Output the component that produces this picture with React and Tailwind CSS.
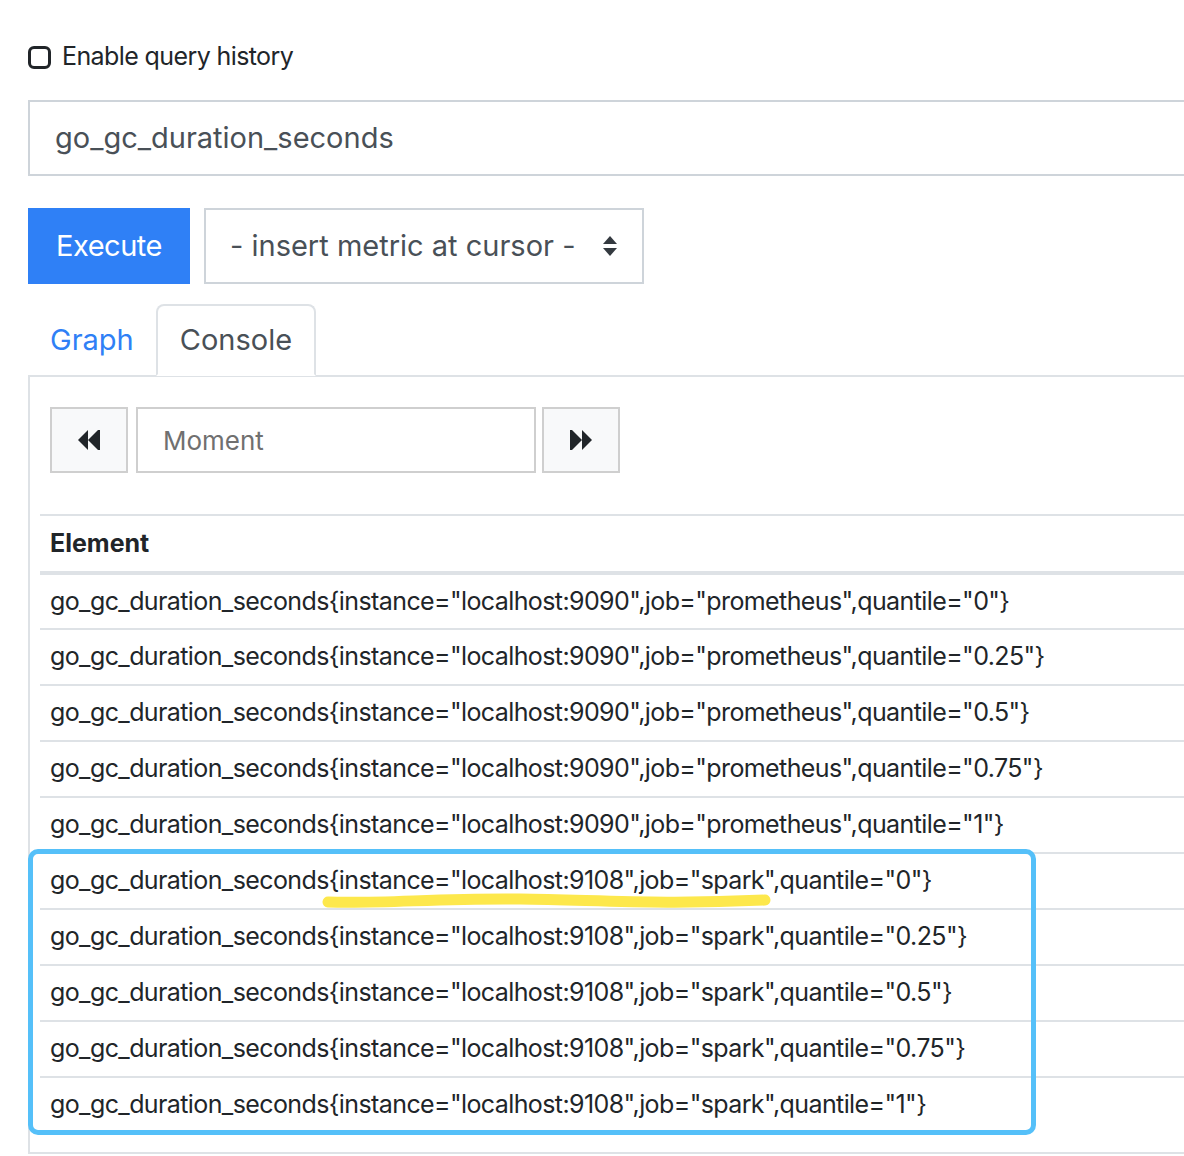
import React from 'react';

const rows = [
  ['localhost:9090', 'prometheus', '0'],
  ['localhost:9090', 'prometheus', '0.25'],
  ['localhost:9090', 'prometheus', '0.5'],
  ['localhost:9090', 'prometheus', '0.75'],
  ['localhost:9090', 'prometheus', '1'],
  ['localhost:9108', 'spark', '0'],
  ['localhost:9108', 'spark', '0.25'],
  ['localhost:9108', 'spark', '0.5'],
  ['localhost:9108', 'spark', '0.75'],
  ['localhost:9108', 'spark', '1'],
];

function Rewind({ flip }) {
  return (
    <svg width="24" height="22" viewBox="0 0 24 22" className={flip ? 'rotate-180' : ''}>
      <path d="M1 11 L11 1 L11 21 Z" fill="#212529" />
      <path d="M11 11 L21 1 L21 21 Z" fill="#212529" />
      <rect x="21" y="1" width="2" height="20" fill="#212529" />
    </svg>
  );
}

export default function App() {
  return (
    <div className="w-[1184px] h-[1156px] overflow-hidden bg-white pl-[28px] pt-[43px] text-[#212529]" style={{ fontFamily: 'Inter, "Noto Sans", sans-serif' }}>
      <label className="flex items-center gap-[11px] h-[28px] text-[25px] tracking-[-0.6px]">
        <span className="w-[23px] h-[23px] rounded-[6px] border-[3px] border-[#212529]" />
        <span>Enable query history</span>
      </label>

      <div className="mt-[29px] w-[1200px] h-[76px] border-2 border-[#ced4da] flex items-center pl-[25px] text-[29px] text-[#495057]">
        go_gc_duration_seconds
      </div>

      <div className="mt-[32px] flex gap-[14px]">
        <button className="w-[162px] h-[76px] bg-[#2f80f6] text-white text-[29px] tracking-[-0.5px]">Execute</button>
        <div className="w-[440px] h-[76px] border-2 border-[#ced4da] flex items-center justify-between pl-[24px] pr-[24px] text-[29px] text-[#495057]">
          <span>- insert metric at cursor -</span>
          <svg width="16" height="22" viewBox="0 0 16 22">
            <path d="M8 1 L15 9 L1 9 Z" fill="#343a40" />
            <path d="M1 13 L15 13 L8 21 Z" fill="#343a40" />
          </svg>
        </div>
      </div>

      <div className="mt-[20px] flex w-[1200px] border-b-2 border-[#dee2e6] text-[29px]">
        <div className="h-[71px] px-[22px] flex items-center text-[#2f80f6]">Graph</div>
        <div className="h-[72px] -mb-[2px] px-[22px] flex items-center border-2 border-b-white border-[#dee2e6] rounded-t-[8px] bg-white text-[#495057]">Console</div>
      </div>

      <div className="w-[1200px] h-[777px] border-l-2 border-b-2 border-[#dee2e6] pl-[10px] pt-[30px]">
        <div className="flex ml-[10px] h-[66px]">
          <button className="w-[78px] h-[66px] bg-[#f8f9fa] border-2 border-[#cfcfcf] flex items-center justify-center">
            <Rewind />
          </button>
          <div className="ml-[8px] w-[400px] h-[66px] border-2 border-[#cfcfcf] flex items-center pl-[25px] text-[26px] text-[#707070]">Moment</div>
          <button className="ml-[6px] w-[78px] h-[66px] bg-[#f8f9fa] border-2 border-[#cfcfcf] flex items-center justify-center">
            <Rewind flip />
          </button>
        </div>

        <div className="relative mt-[41px] text-[25px] tracking-[-0.6px]">
          <div className="border-t-2 border-[#dee2e6] border-b-4 h-[61px] flex items-center pl-[10px] font-bold tracking-normal">Element</div>
          {rows.map((r, i) => (
            <div key={i} className={`flex items-center pl-[10px] ${i > 0 ? 'h-[56px] border-t-2 border-[#dee2e6]' : 'h-[53px]'}`}>
              {`go_gc_duration_seconds{instance="${r[0]}",job="${r[1]}",quantile="${r[2]}"}`}
            </div>
          ))}
          <div className="absolute left-[-12px] top-[335px] w-[1008px] h-[286px] border-[5px] border-[#55c0f9] rounded-[10px] pointer-events-none" />
          <svg className="absolute left-[280px] top-[375px] pointer-events-none" width="460" height="30" viewBox="0 0 460 30">
            <path d="M8 13 C 60 15, 120 9, 200 10 S 340 16, 445 11" stroke="#fde84c" strokeWidth="11" strokeLinecap="round" fill="none" />
          </svg>
        </div>
      </div>
    </div>
  );
}
